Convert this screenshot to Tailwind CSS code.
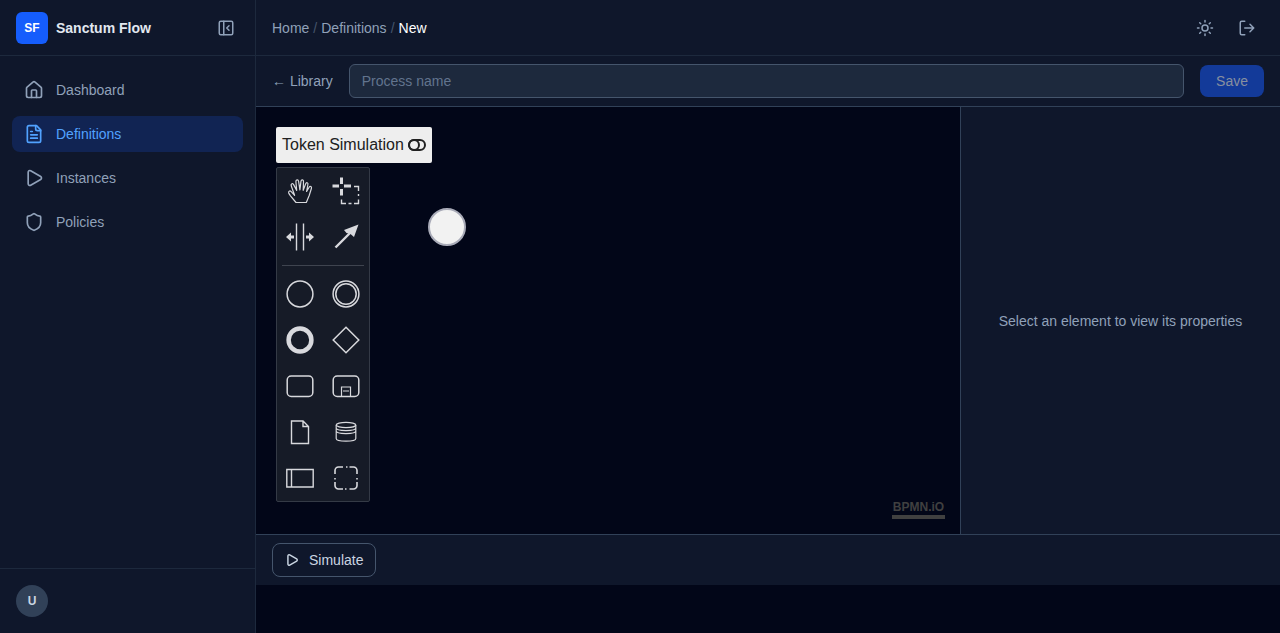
<!DOCTYPE html>
<html lang="en">
<head>
<meta charset="utf-8">
<meta name="viewport" content="width=device-width, initial-scale=1">
<title>Sanctum Flow</title>
<script src="https://cdn.jsdelivr.net/npm/@tailwindcss/browser@4"></script>
</head>
<body class="flex min-h-screen bg-slate-950 font-['Liberation_Sans',Arial,sans-serif] text-sm text-slate-400">
<aside class="flex w-64 shrink-0 flex-col border-r border-slate-800 bg-slate-900">
  <div class="flex h-14 items-center justify-between border-b border-slate-800 px-4">
    <div class="flex items-center gap-2">
      <span class="flex size-8 items-center justify-center rounded-md bg-[#155dfc] text-xs font-bold text-white">SF</span>
      <span class="font-bold text-slate-200">Sanctum Flow</span>
    </div>
    <button type="button" aria-label="Collapse sidebar" class="p-1">
      <svg class="size-[18px]" viewBox="0 0 24 24" fill="none" stroke="currentColor" stroke-width="2" stroke-linecap="round" stroke-linejoin="round"><rect x="3" y="3" width="18" height="18" rx="2"/><path d="M9 3v18M16 15l-3-3 3-3"/></svg>
    </button>
  </div>
  <nav class="flex flex-1 flex-col gap-2 px-3 py-4">
    <a href="#" class="flex items-center gap-3 rounded-lg px-3 py-2">
      <svg class="size-5" viewBox="0 0 24 24" fill="none" stroke="currentColor" stroke-width="2" stroke-linecap="round" stroke-linejoin="round"><path d="M15 21v-8a1 1 0 0 0-1-1h-4a1 1 0 0 0-1 1v8"/><path d="M3 10a2 2 0 0 1 .709-1.528l7-5.999a2 2 0 0 1 2.582 0l7 5.999A2 2 0 0 1 21 10v9a2 2 0 0 1-2 2H5a2 2 0 0 1-2-2z"/></svg>
      Dashboard</a>
    <a href="#" aria-current="page" class="flex items-center gap-3 rounded-lg bg-[#112453] px-3 py-2 text-[#51a2ff]">
      <svg class="size-5" viewBox="0 0 24 24" fill="none" stroke="currentColor" stroke-width="2" stroke-linecap="round" stroke-linejoin="round"><path d="M15 2H6a2 2 0 0 0-2 2v16a2 2 0 0 0 2 2h12a2 2 0 0 0 2-2V7Z"/><path d="M14 2v4a2 2 0 0 0 2 2h4M10 9H8M16 13H8M16 17H8"/></svg>
      Definitions</a>
    <a href="#" class="flex items-center gap-3 rounded-lg px-3 py-2">
      <svg class="size-5" viewBox="0 0 24 24" fill="none" stroke="currentColor" stroke-width="2" stroke-linecap="round" stroke-linejoin="round"><path d="M5 5a2 2 0 0 1 3.008-1.728l11.997 6.998a2 2 0 0 1 .003 3.458l-12 7A2 2 0 0 1 5 19z"/></svg>
      Instances</a>
    <a href="#" class="flex items-center gap-3 rounded-lg px-3 py-2">
      <svg class="size-5" viewBox="0 0 24 24" fill="none" stroke="currentColor" stroke-width="2" stroke-linecap="round" stroke-linejoin="round"><path d="M20 13c0 5-3.5 7.5-7.66 8.95a1 1 0 0 1-.67-.01C7.5 20.5 4 18 4 13V6a1 1 0 0 1 1-1c2 0 4.5-1.2 6.24-2.72a1.17 1.17 0 0 1 1.52 0C14.51 3.81 17 5 19 5a1 1 0 0 1 1 1z"/></svg>
      Policies</a>
  </nav>
  <div class="border-t border-slate-800 p-4">
    <span class="flex size-8 items-center justify-center rounded-full bg-slate-700 text-xs font-bold text-slate-300">U</span>
  </div>
</aside>

<div class="flex min-w-0 flex-1 flex-col pb-12">
  <header class="flex h-14 items-center justify-between border-b border-slate-800 bg-slate-900 px-4">
    <nav aria-label="Breadcrumb" class="flex gap-1">
      <a href="#">Home</a><span class="text-slate-600">/</span><a href="#">Definitions</a><span class="text-slate-600">/</span><span class="text-white">New</span>
    </nav>
    <div class="flex gap-2">
      <button type="button" aria-label="Toggle theme" class="p-2">
        <svg class="size-[18px]" viewBox="0 0 24 24" fill="none" stroke="currentColor" stroke-width="2" stroke-linecap="round" stroke-linejoin="round"><circle cx="12" cy="12" r="4"/><path d="M12 2v2M12 20v2M4.93 4.93l1.41 1.41M17.66 17.66l1.41 1.41M2 12h2M20 12h2M6.34 17.66l-1.41 1.41M19.07 4.93l-1.41 1.41"/></svg>
      </button>
      <button type="button" aria-label="Log out" class="p-2">
        <svg class="size-[18px]" viewBox="0 0 24 24" fill="none" stroke="currentColor" stroke-width="2" stroke-linecap="round" stroke-linejoin="round"><path d="M9 21H5a2 2 0 0 1-2-2V5a2 2 0 0 1 2-2h4M16 17l5-5-5-5M21 12H9"/></svg>
      </button>
    </div>
  </header>

  <div class="flex items-center gap-4 border-b border-slate-700 bg-slate-900 px-4 py-2">
    <a href="#" class="whitespace-nowrap">← Library</a>
    <input type="text" aria-label="Process name" placeholder="Process name" class="h-[34px] min-w-0 flex-1 rounded-md border border-slate-600 bg-slate-800 px-3 text-slate-100 placeholder:text-slate-500">
    <button type="button" disabled class="rounded-lg bg-[#133a99] px-4 py-1.5 text-[#878f9f]">Save</button>
  </div>

  <div class="flex min-h-0 flex-1">
    <main class="relative min-w-0 flex-1 p-5">
      <div class="flex flex-col items-start gap-1">
        <button type="button" class="flex h-9 items-center gap-1 rounded-xs bg-[#eeeeee] px-1.5 text-base text-[#212121]">Token Simulation
          <svg class="h-3 w-[18px]" viewBox="0 0 18 12" fill="none" stroke="currentColor" stroke-width="2"><rect x="1" y="1" width="16" height="10" rx="5"/><circle cx="6" cy="6" r="5"/></svg>
        </button>
        <div class="grid w-[94px] grid-cols-2 rounded-xs border border-[#343a46] bg-[#161b27] text-[#d8d9dd]">
          <button type="button" aria-label="Hand tool" class="flex h-[46px] items-center justify-center pb-px"><svg class="size-7" viewBox="0 0 28 28" fill="none" stroke="currentColor" stroke-width="1.2" stroke-linejoin="round"><path d="M10 25.500 4.500 18.800C3.500 17.500 3 16.800 2.700 16C2.200 14.300 3.800 13.300 5.200 14.600L8.600 18.300L5.200 8.800C4.600 6.600 6.900 5.800 7.600 7.600L10.700 13.400L9.900 4.800C9.800 2.600 12.200 2.200 12.600 4.300L13.900 12.800L15 4.200C15.300 2.200 17.700 2.500 17.500 4.500L17.200 13.300L19.700 6.800C20.400 4.900 22.400 5.600 21.900 7.500L20.600 14.500L23.100 10.300C24.100 8.700 26 9.600 25.400 11.500L23.200 18.500L20.300 25.500Z"/></svg></button>
          <button type="button" aria-label="Lasso tool" class="flex h-[46px] items-center justify-center pb-px"><svg class="size-7" viewBox="0 0 28 28" fill="none" stroke="currentColor"><path stroke-width="3" d="M9.500 .500v6.500M9.500 12v6.500M.500 9h6.500M12 9h7"/><path stroke-width="1.400" d="M22 9.500h4.500v4.500M26.500 17v2M26.500 22.500v4.500M27 26.500h-5M19.500 26.500h-3M14 26.500h-4.500v-4"/></svg></button>
          <button type="button" aria-label="Space tool" class="flex h-[46px] items-center justify-center pb-px"><svg class="size-7" viewBox="0 0 28 28"><path fill="none" stroke="currentColor" stroke-width="1.400" d="M10.500 .500v27M17.500 .500v27"/><path fill="currentColor" d="M0 14l5-4.500v3h3v3H5v3zM28 14l-5-4.500v3h-3v3h3v3z"/></svg></button>
          <button type="button" aria-label="Connect tool" class="flex h-[46px] items-center justify-center pb-px"><svg class="size-7" viewBox="0 0 28 28"><path fill="none" stroke="currentColor" stroke-width="2.400" d="M3.500 24.500 18.500 9.500"/><path fill="currentColor" d="M26.500 1.500 22 14l-3.500-3-4-1-2.500-3z"/></svg></button>
          <hr class="col-span-2 m-[5px] border-[#3f444f]">
          <button type="button" aria-label="Create start event" class="flex h-[46px] items-center justify-center pb-px"><svg class="size-7" viewBox="0 0 28 28" fill="none" stroke="currentColor" stroke-width="1.500"><circle cx="14" cy="14" r="12.900"/></svg></button>
          <button type="button" aria-label="Create intermediate event" class="flex h-[46px] items-center justify-center pb-px"><svg class="size-7" viewBox="0 0 28 28" fill="none" stroke="currentColor" stroke-width="1.500"><circle cx="14" cy="14" r="12.900"/><circle cx="14" cy="14" r="10.200"/></svg></button>
          <button type="button" aria-label="Create end event" class="flex h-[46px] items-center justify-center pb-px"><svg class="size-7" viewBox="0 0 28 28" fill="none" stroke="currentColor" stroke-width="4.500"><circle cx="14" cy="14" r="11.400"/></svg></button>
          <button type="button" aria-label="Create gateway" class="flex h-[46px] items-center justify-center pb-px"><svg class="size-7" viewBox="0 0 28 28" fill="none" stroke="currentColor" stroke-width="1.500"><path d="M14 1.200 26.800 14 14 26.800 1.200 14z"/></svg></button>
          <button type="button" aria-label="Create task" class="flex h-[46px] items-center justify-center pb-px"><svg class="size-7" viewBox="0 0 28 28" fill="none" stroke="currentColor" stroke-width="1.500"><rect x="1.200" y="4" width="25.600" height="20.500" rx="4"/></svg></button>
          <button type="button" aria-label="Create sub-process" class="flex h-[46px] items-center justify-center pb-px"><svg class="size-7" viewBox="0 0 28 28" fill="none" stroke="currentColor" stroke-width="1.500"><rect x="1.200" y="4" width="25.600" height="20.500" rx="4"/><path stroke-width="1.200" d="M9.500 24v-9h9v9M11 19h6"/></svg></button>
          <button type="button" aria-label="Create data object" class="flex h-[46px] items-center justify-center pb-px"><svg class="size-7" viewBox="0 0 28 28" fill="none" stroke="currentColor" stroke-width="1.400"><path d="M5.500 3h11.500l5.500 5.500v17h-17zM17 3v5.500h5.500"/></svg></button>
          <button type="button" aria-label="Create data store" class="flex h-[46px] items-center justify-center pb-px"><svg class="size-7" viewBox="0 0 28 28" fill="none" stroke="currentColor" stroke-width="1.200"><ellipse cx="14" cy="7" rx="9.800" ry="2.600"/><path d="M4.200 7v13.500c0 3.600 19.600 3.600 19.600 0V7M4.200 10c0 3.400 19.600 3.400 19.600 0M4.200 13c0 3.400 19.600 3.400 19.600 0"/></svg></button>
          <button type="button" aria-label="Create pool" class="flex h-[46px] items-center justify-center pb-px"><svg class="size-7" viewBox="0 0 28 28" fill="none" stroke="currentColor" stroke-width="1.400"><path d="M.800 5.500h26.400v17.500H.800zM5.500 5.500v17.500"/></svg></button>
          <button type="button" aria-label="Create group" class="flex h-[46px] items-center justify-center pb-px"><svg class="size-7" viewBox="0 0 28 28" fill="none" stroke="currentColor" stroke-width="1.600"><path d="M3 10V6.500a3.500 3.500 0 0 1 3.500-3.500H11M17.500 3h4a3.500 3.500 0 0 1 3.500 3.500V10M25 18v3.500a3.500 3.500 0 0 1-3.500 3.500h-4M11 25H6.500A3.500 3.500 0 0 1 3 21.500V18M14 3h1.500M13 25h1.500M3 14v1.500M25 14v1.500"/></svg></button>
        </div>
      </div>
      <!-- start event shape on the diagram -->
      <svg class="absolute left-[172px] top-[101px] size-[38px]" viewBox="0 0 38 38"><circle cx="19" cy="19" r="18" fill="#f2f2f2" stroke="#a9abb8" stroke-width="2"/></svg>
      <a href="#" class="absolute bottom-[15px] right-[15px] flex h-[21px] w-[53px] items-center justify-center border-b-4 border-[#404040] text-xs font-bold text-[#404040]">BPMN.iO</a>
    </main>
    <aside class="flex w-80 shrink-0 items-center justify-center border-l border-slate-700 bg-slate-900 p-4">Select an element to view its properties</aside>
  </div>

  <footer class="flex border-t border-slate-700 bg-slate-900 px-4 py-2">
    <button type="button" class="flex h-[34px] items-center gap-2.5 rounded-lg border border-slate-600 px-3 text-slate-300">
      <svg class="size-3.5" viewBox="0 0 24 24" fill="none" stroke="currentColor" stroke-width="2.500" stroke-linecap="round" stroke-linejoin="round"><path d="M5 5a2 2 0 0 1 3.008-1.728l11.997 6.998a2 2 0 0 1 .003 3.458l-12 7A2 2 0 0 1 5 19z"/></svg>
      Simulate</button>
  </footer>
</div>
</body>
</html>
